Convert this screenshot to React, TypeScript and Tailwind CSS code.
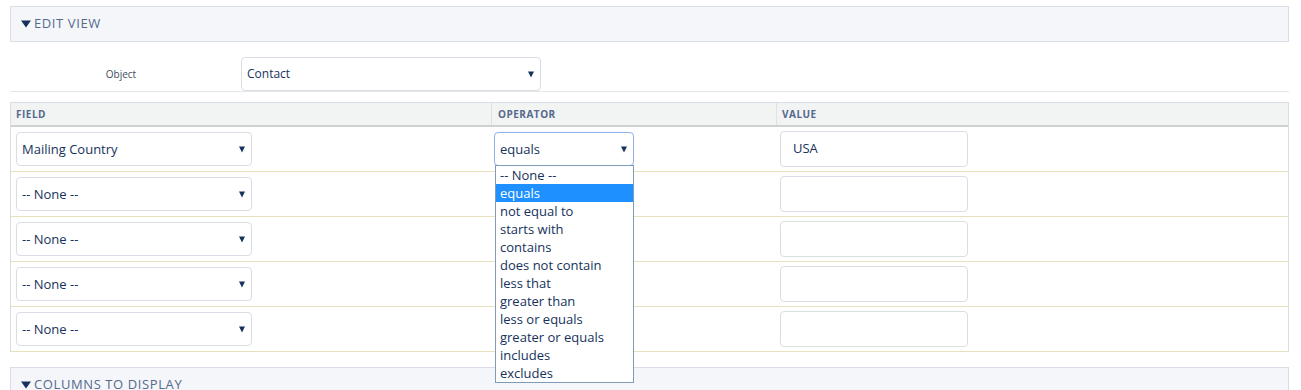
import { useState } from 'react';

const font = { fontFamily: '"Open Sans", "Noto Sans", Arial, sans-serif' };

const operators = [
  '-- None --',
  'equals',
  'not equal to',
  'starts with',
  'contains',
  'does not contain',
  'less that',
  'greater than',
  'less or equals',
  'greater or equals',
  'includes',
  'excludes',
];

function Caret({ className = '' }: { className?: string }) {
  return (
    <svg className={className} width="6" height="7" viewBox="0 0 6 7">
      <path d="M0 0.5h6L3 6.5z" fill="#16325c" />
    </svg>
  );
}

function SectionHeader({ title }: { title: string }) {
  return (
    <div className="h-[36px] bg-[#f4f6f9] border border-[#d8dde6] flex items-center pl-[10px]">
      <svg width="10" height="8" viewBox="0 0 10 8" className="mr-[3px]">
        <path d="M0 0.5h10L5 7.5z" fill="#16325c" />
      </svg>
      <span className="text-[13px] tracking-[0.6px] text-[#54698d] uppercase">{title}</span>
    </div>
  );
}

function SelectBox({ value, width, focused = false }: { value: string; width: string; focused?: boolean }) {
  return (
    <div
      className={`${width} h-[34px] rounded-[4px] border bg-white flex items-center justify-between pl-[5px] pr-[6px] pt-[1px] ${
        focused ? 'border-[#8fb3e8]' : 'border-[#d8dde6]'
      }`}
    >
      <span className="text-[13px] text-[#16325c]">{value}</span>
      <Caret />
    </div>
  );
}

export default function App() {
  const [rows] = useState([
    { field: 'Mailing Country', op: 'equals', value: 'USA' },
    { field: '-- None --', op: '', value: '' },
    { field: '-- None --', op: '', value: '' },
    { field: '-- None --', op: '', value: '' },
    { field: '-- None --', op: '', value: '' },
  ]);

  return (
    <div className="h-[390px] overflow-hidden bg-white" style={font}>
      <div className="ml-[10px] w-[1279px] pt-[6px]">
        <SectionHeader title="Edit View" />

        {/* Object row */}
        <div className="flex items-end h-[50px] border-b border-[#e6e6e6]">
          <div className="w-[222px] h-[34px] flex items-center justify-center">
            <span className="text-[10px] text-[#3e4a5c]">Object</span>
          </div>
          <div className="ml-[9px] w-[300px] h-[34px] rounded-[4px] border border-[#d8dde6] flex items-center justify-between pl-[5px] pr-[6px]">
            <span className="text-[12px] text-[#16325c]">Contact</span>
            <Caret />
          </div>
        </div>

        {/* Filter table */}
        <div className="mt-[10px] border border-[#d8dde6] border-b-0">
          <div className="grid grid-cols-[480px_285px_1fr] h-[24px] bg-[#f2f3f3] border-b-2 border-[#cfd0d0] text-[10px] font-bold tracking-[0.5px] text-[#54698d]">
            <div className="flex items-center pl-[5px]">FIELD</div>
            <div className="flex items-center pl-[6px] border-l border-[#e0e2e2]">OPERATOR</div>
            <div className="flex items-center pl-[5px] border-l border-[#e0e2e2]">VALUE</div>
          </div>
          {rows.map((row, i) => (
            <div key={i} className="grid grid-cols-[480px_285px_1fr] h-[45px] border-b border-[#e8e1bd] items-center">
              <div className="pl-[5px]">
                <SelectBox value={row.field} width="w-[236px]" />
              </div>
              <div className="pl-[3px]">
                {i === 0 ? (
                  <div className="relative w-[140px]">
                    <SelectBox value={row.op} width="w-[140px]" focused />
                    <ul className="absolute z-10 top-[33px] left-[1px] w-[139px] border border-[#7f9db9] bg-white">
                      {operators.map((op) => (
                        <li
                          key={op}
                          className={`h-[18px] leading-[18px] pl-[4px] text-[13px] ${
                            op === 'equals' ? 'bg-[#1e90ff] text-white' : 'text-[#16325c]'
                          }`}
                        >
                          {op}
                        </li>
                      ))}
                    </ul>
                  </div>
                ) : null}
              </div>
              <div className="pl-[4px]">
                <div className="w-[188px] h-[36px] rounded-[4px] border border-[#d8dde6] flex items-center pl-[12px]">
                  <span className="text-[13px] text-[#16325c]">{row.value}</span>
                </div>
              </div>
            </div>
          ))}
        </div>

        <div className="mt-[15px]">
          <SectionHeader title="Columns to Display" />
        </div>
      </div>
    </div>
  );
}
